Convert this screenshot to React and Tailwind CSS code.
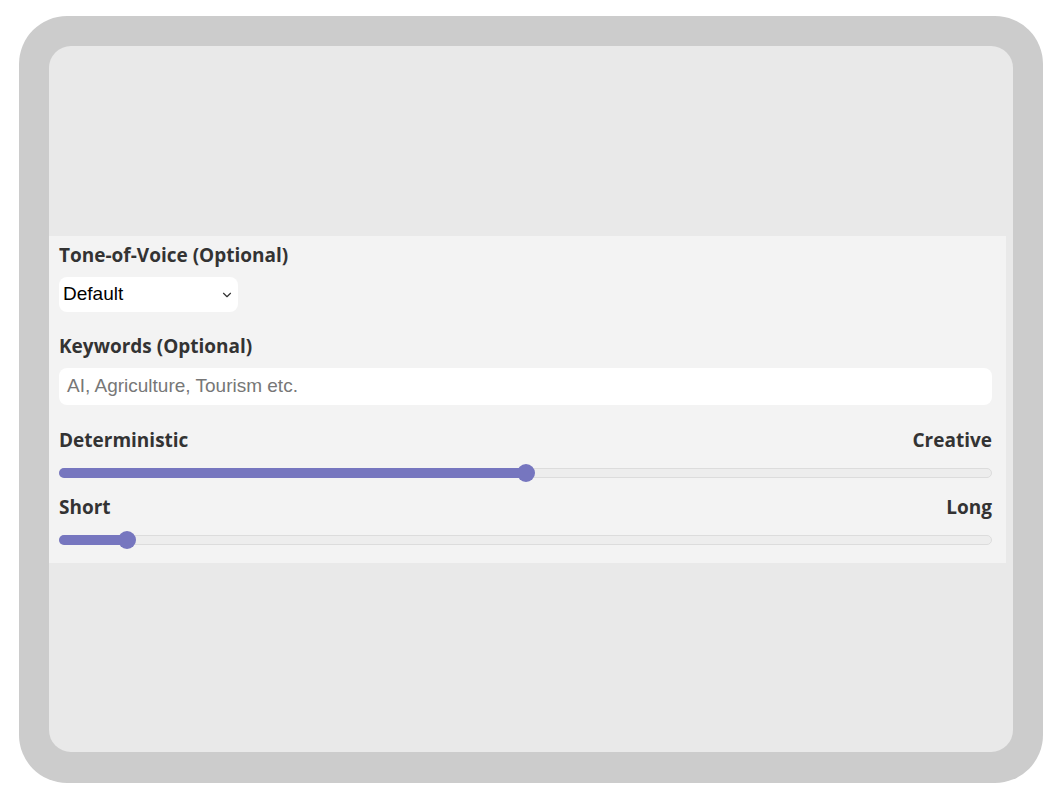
import { ChevronDown } from "lucide-react";

function Slider({ percent }) {
  return (
    <div className="relative h-[10px] rounded-full border border-[#dcdcdc] bg-[#ededed]">
      <div
        className="absolute -left-px -top-px h-[10px] rounded-full bg-[#7676bf]"
        style={{ width: `${percent}%` }}
      />
      <div
        className="absolute top-1/2 h-[18px] w-[18px] -translate-x-1/2 -translate-y-1/2 rounded-full bg-[#7676bf]"
        style={{ left: `${percent}%` }}
      />
    </div>
  );
}

export default function App() {
  const label = "text-[19px] leading-[24px] font-bold text-[#333]";

  return (
    <div className="h-[800px] w-[1056px] bg-white pl-[19px] pt-[16px]">
      <div className="h-[767px] w-[1024px] rounded-[48px] bg-[#cccccc] pl-[30px] pt-[30px]">
        <div className="h-[706px] w-[964px] overflow-hidden rounded-[22px] bg-[#e9e9e9] pt-[190px]">
          <div
            className="w-[957px] bg-[#f3f3f3] pb-[18px] pl-[10px] pr-[14px] pt-[7px]"
            style={{ fontFamily: '"Open Sans", sans-serif' }}
          >
            <div className={label}>Tone-of-Voice (Optional)</div>
            <div
              className="mt-[10px] flex h-[35px] w-[179px] items-center justify-between rounded-[8px] bg-white pl-[4px] pr-[4px] text-[19px] text-black"
              style={{ fontFamily: '"Liberation Sans", Arial, sans-serif' }}
            >
              <span>Default</span>
              <ChevronDown size={14} strokeWidth={2} className="text-[#333]" />
            </div>

            <div className={`${label} mt-[22px]`}>Keywords (Optional)</div>
            <div
              className="mt-[10px] flex h-[37px] items-center rounded-[8px] bg-white pl-[8px] text-[19px] text-[#777]"
              style={{ fontFamily: '"Liberation Sans", Arial, sans-serif' }}
            >
              AI, Agriculture, Tourism etc.
            </div>

            <div className={`${label} mt-[23px] flex justify-between`}>
              <span>Deterministic</span>
              <span>Creative</span>
            </div>
            <div className="mt-[16px]">
              <Slider percent={50} />
            </div>

            <div className={`${label} mt-[17px] flex justify-between`}>
              <span>Short</span>
              <span>Long</span>
            </div>
            <div className="mt-[16px]">
              <Slider percent={7.2} />
            </div>
          </div>
        </div>
      </div>
    </div>
  );
}
